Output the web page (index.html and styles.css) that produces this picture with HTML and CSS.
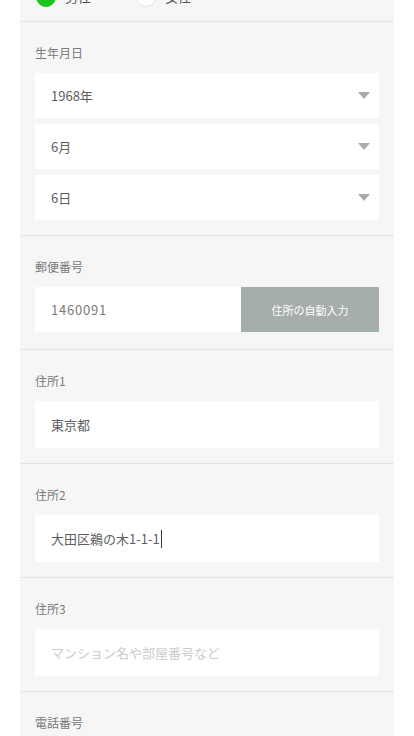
FILE: index.html
```html
<!DOCTYPE html>
<html lang="ja">
<head>
<meta charset="utf-8">
<title>会員情報</title>
<link rel="stylesheet" href="styles.css">
</head>
<body>
<div class="page">
  <div class="section gender">
    <div class="radios">
      <span class="radio"><span class="dot on"></span><span class="rtext">男性</span></span>
      <span class="radio"><span class="dot"></span><span class="rtext">女性</span></span>
    </div>
  </div>
  <div class="section">
    <div class="label">生年月日</div>
    <div class="stack">
      <div class="field select"><span class="value">1968年</span><span class="arrow"></span></div>
      <div class="field select"><span class="value">6月</span><span class="arrow"></span></div>
      <div class="field select"><span class="value">6日</span><span class="arrow"></span></div>
    </div>
  </div>
  <div class="section postal-section">
    <div class="label">郵便番号</div>
    <div class="postal">
      <div class="field postal-input"><span class="value num">1460091</span></div>
      <div class="auto-btn">住所の自動入力</div>
    </div>
  </div>
  <div class="section">
    <div class="label">住所1</div>
    <div class="field text"><span class="value">東京都</span></div>
  </div>
  <div class="section">
    <div class="label">住所2</div>
    <div class="field text"><span class="value">大田区鵜の木1-1-1</span><span class="caret"></span></div>
  </div>
  <div class="section">
    <div class="label">住所3</div>
    <div class="field text"><span class="placeholder">マンション名や部屋番号など</span></div>
  </div>
  <div class="section">
    <div class="label">電話番号</div>
    <div class="field text"></div>
  </div>
</div>
</body>
</html>
```
FILE: styles.css
```css
html, body {
  margin: 0;
  padding: 0;
  background: #ffffff;
}
body {
  font-family: "Noto Sans CJK JP", "Noto Sans", sans-serif;
  overflow: hidden;
}
.page {
  width: 374px;
  margin-left: 20px;
  margin-top: -13px;
  background: #f6f6f6;
  padding-top: 1px;
}
.section {
  border-top: 1px solid #dfe6e4;
  padding: 22px 15px 15px;
}
.section.gender {
  border-top: none;
  padding: 0 15px 14px 16px;
  margin-top: -1px;
}
.radios {
  display: flex;
  align-items: center;
  height: 20px;
  gap: 45px;
}
.radio {
  display: flex;
  align-items: center;
  gap: 9px;
}
.dot {
  width: 18px;
  height: 18px;
  border-radius: 50%;
  background: #ffffff;
  border: 1px solid #e2e2e2;
}
.dot.on {
  background: #1ec31e;
  border-color: #1ec31e;
}
.rtext {
  font-size: 13px;
  color: #555;
  line-height: 20px;
}
.label {
  font-size: 12px;
  line-height: 18px;
  color: #7a7a7a;
  margin-bottom: 11px;
}
.stack {
  display: flex;
  flex-direction: column;
  gap: 6px;
}
.field {
  background: #ffffff;
  height: 45px;
  display: flex;
  align-items: center;
  padding: 0 9px 0 16px;
  box-sizing: border-box;
  font-size: 13px;
  color: #5e5e5e;
}
.field.text {
  height: 47px;
}
.select {
  justify-content: space-between;
}
.value {
  line-height: 18px;
}
.num {
  color: #7a7a7a;
  letter-spacing: 0.8px;
}
.arrow {
  width: 0;
  height: 0;
  border-left: 6.5px solid transparent;
  border-right: 6.5px solid transparent;
  border-top: 7px solid #ababab;
}
.postal-section {
  padding-bottom: 17px;
}
.postal {
  display: flex;
  height: 45px;
}
.postal-input {
  flex: 1;
}
.auto-btn {
  width: 138px;
  background: #a6aeab;
  color: #ffffff;
  font-size: 11px;
  display: flex;
  align-items: center;
  justify-content: center;
}
.caret {
  width: 1px;
  height: 18px;
  background: #333333;
  margin-left: 1px;
}
.placeholder {
  color: #cccccc;
  line-height: 18px;
}
```
